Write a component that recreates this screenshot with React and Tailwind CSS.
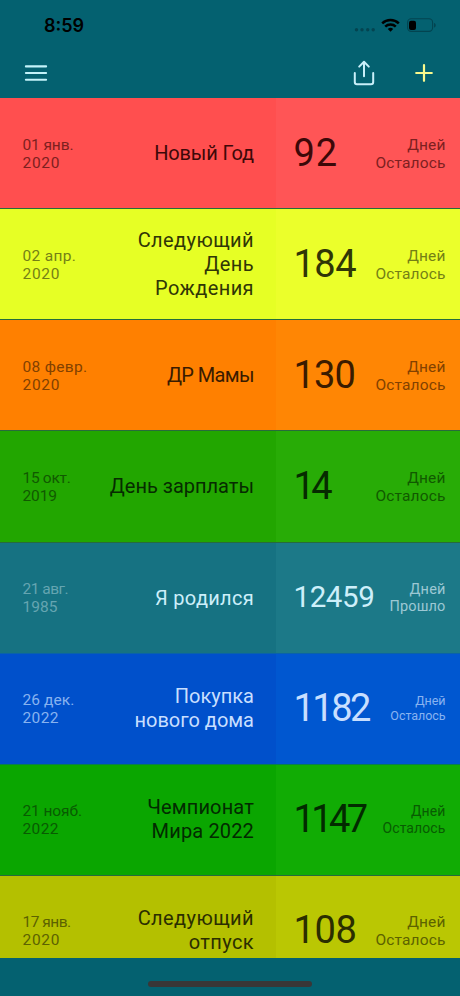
const events = [
    { day: '01 янв.', year: '2020', title: ['Новый Год'], count: '92', status: 'Осталось', row: 'bg-[#ff4f4f]', side: 'bg-[#ff5556]', text: 'text-[#3d0808]', muted: 'text-[#7d2020]', daySpace: '-tracking-[0.1px]', yearSpace: 'tracking-[0.7px]', titleSpace: '-tracking-[0.15px]', countSpace: 'tracking-[0.8px]' },
    { day: '02 апр.', year: '2020', title: ['Следующий', 'День', 'Рождения'], count: '184', status: 'Осталось', row: 'bg-[#e6ff25]', side: 'bg-[#ebff2b]', text: 'text-[#303606]', muted: 'text-[#747f15]', daySpace: 'tracking-[0.3px]', yearSpace: 'tracking-[0.7px]', titleSpace: 'tracking-[0.4px]', countSpace: '-tracking-[0.5px]' },
    { day: '08 февр.', year: '2020', title: ['ДР Мамы'], count: '130', status: 'Осталось', row: 'bg-[#ff8000]', side: 'bg-[#ff8604]', text: 'text-[#3a1b00]', muted: 'text-[#824100]', daySpace: 'tracking-[0.3px]', yearSpace: 'tracking-[0.7px]', titleSpace: '-tracking-[0.6px]', countSpace: '-tracking-[0.8px]' },
    { day: '15 окт.', year: '2019', title: ['День зарплаты'], count: '14', status: 'Осталось', row: 'bg-[#22a600]', side: 'bg-[#28ac06]', text: 'text-[#062b00]', muted: 'text-[#115900]', daySpace: '-tracking-[0.3px]', yearSpace: '-tracking-[0.1px]', titleSpace: 'tracking-[0px]', countSpace: '-tracking-[3.5px]' },
    { day: '21 авг.', year: '1985', title: ['Я родился'], count: '12459', status: 'Прошло', row: 'bg-[#167282]', side: 'bg-[#1c7988]', text: 'text-[#cdeffa]', muted: 'text-[#9cc8d4]', date: 'text-[#65a5b1]', divider: 'border-[#0a62a8]', size: 'text-[29.5px]', label: 'text-[14.5px] leading-[17px]', daySpace: '-tracking-[0.5px]', yearSpace: 'tracking-[0px]', titleSpace: 'tracking-[0.3px]', countSpace: '-tracking-[0.4px]' },
    { day: '26 дек.', year: '2022', title: ['Покупка', 'нового дома'], count: '1182', status: 'Осталось', row: 'bg-[#0050cb]', side: 'bg-[#0057d0]', text: 'text-[#c8dfff]', muted: 'text-[#88b3f0]', divider: 'border-[#0a7d50]', nudge: 'pt-0', label: 'text-[12.5px] leading-[14.5px]', labelSpace: '-tracking-[0.05px]', daySpace: 'tracking-[0.1px]', yearSpace: 'tracking-[0.4px]', titleSpace: 'tracking-[0px]', countSpace: '-tracking-[2.5px]' },
    { day: '21 нояб.', year: '2022', title: ['Чемпионат', 'Мира 2022'], count: '1147', status: 'Осталось', row: 'bg-[#0aa600]', side: 'bg-[#11ac04]', text: 'text-[#022b00]', muted: 'text-[#085b02]', nudge: 'pt-0', label: 'text-[14px] leading-[16.5px]', labelSpace: 'tracking-[0.1px]', daySpace: '-tracking-[0.1px]', yearSpace: 'tracking-[0.4px]', titleSpace: 'tracking-[0.15px]', countSpace: '-tracking-[3.6px]' },
    { day: '17 янв.', year: '2020', title: ['Следующий', 'отпуск'], count: '108', status: 'Осталось', row: 'bg-[#b4c000]', side: 'bg-[#bac703]', text: 'text-[#2b2e00]', muted: 'text-[#5c6200]', nudge: 'pt-0', daySpace: '-tracking-[0.5px]', yearSpace: 'tracking-[0.7px]', titleSpace: 'tracking-[0.4px]', countSpace: '-tracking-[0.4px]' },
];

const StatusBar = () => (
    <div className="flex h-[50px] items-center justify-between pl-11 pr-6 text-black">
        <span className="text-[18px] font-semibold font-['Inter',sans-serif]">8:59</span>
        <div className="flex items-center">
            <svg width="22" height="18" viewBox="0 0 22 18" fill="#044450">
                <circle cx="3.5" cy="13.7" r="1.7" />
                <circle cx="9" cy="13.7" r="1.7" />
                <circle cx="14.7" cy="13.7" r="1.7" />
                <circle cx="20.2" cy="13.7" r="1.7" />
            </svg>
            <svg className="ml-1.5" width="19" height="14" viewBox="0 0 19 14" fill="none" stroke="black" strokeWidth="2.5">
                <path d="M1.2 5.4a12 12 0 0 1 16.6 0" />
                <path d="M4.2 8.6a7.7 7.7 0 0 1 10.6 0" />
                <path d="M6.8 11a4 4 0 0 1 5.4 0L9.5 13.8z" fill="black" stroke="none" />
            </svg>
            <svg className="ml-[7px]" width="29" height="14" viewBox="0 0 29 14">
                <rect x="0.6" y="0.8" width="25" height="12.6" rx="3.6" fill="none" stroke="#034450" strokeWidth="1.1" />
                <rect x="2" y="2.7" width="7" height="9.2" rx="2" fill="black" />
                <path d="M27 4.9c2.3.6 2.3 4 0 4.6z" fill="#034450" />
            </svg>
        </div>
    </div>
);

const Toolbar = () => (
    <div className="flex h-12 items-center justify-between pb-[1.5px] pl-6 pr-[26px]">
        <svg width="24" height="20" viewBox="0 0 24 20" stroke="#c3f3fa" strokeWidth="2.1" strokeLinecap="round">
            <path d="M1.9 3.4h20.2M1.9 10h20.2M1.9 16.7h20.2" />
        </svg>
        <div className="flex items-center gap-[39px]">
            <svg width="22" height="28" viewBox="0 0 22 28" fill="none" stroke="#c9eff9" strokeWidth="2" strokeLinecap="round" strokeLinejoin="round">
                <path d="M11 17.3V3M6.2 7.6L11 2.8l4.8 4.8M1.8 14v9a2.2 2.2 0 0 0 2.2 2.2h14a2.2 2.2 0 0 0 2.2-2.2v-9" />
            </svg>
            <svg width="20" height="20" viewBox="0 0 20 20" stroke="#f9f98d" strokeWidth="2.2" strokeLinecap="round">
                <path d="M10 2.2v15.6M2.2 10h15.6" />
            </svg>
        </div>
    </div>
);

const EventRow = ({ event }) => (
    <div className={`flex h-[111.15px] shrink-0 border-b ${event.divider || 'border-[#276b3c]'} ${event.row}`}>
        <div className={`flex w-[276px] items-center justify-between pl-[22.5px] pr-[22px] ${event.nudge || 'pt-[1.5px]'}`}>
            <div className={`text-[15.5px] leading-[18px] whitespace-nowrap ${event.date || event.muted}`}>
                <p className={event.daySpace}>{event.day}</p>
                <p className={event.yearSpace}>{event.year}</p>
            </div>
            <div className={`text-right text-[20px] leading-[23.7px] whitespace-nowrap ${event.titleSpace} ${event.text}`}>
                {event.title.map(line => <p key={line}>{line}</p>)}
            </div>
        </div>
        <div className={`flex flex-1 items-center justify-between pl-[17.5px] pr-[14.5px] ${event.nudge || 'pt-[1.5px]'} ${event.side}`}>
            <span className={`mb-[1.5px] leading-none ${event.size || 'text-[38px]'} ${event.countSpace} ${event.text}`}>{event.count}</span>
            <div className={`text-right ${event.labelSpace || 'tracking-[0.15px]'} ${event.label || 'text-[15.5px] leading-[18px]'} ${event.muted}`}>
                <p>Дней</p>
                <p>{event.status}</p>
            </div>
        </div>
    </div>
);

const App = () => (
    <div className="flex h-screen w-full flex-col overflow-hidden bg-[#046170] font-['Roboto',sans-serif]">
        <StatusBar />
        <Toolbar />
        <main className="flex h-[860px] flex-col overflow-hidden">
            {events.map(event => <EventRow key={event.day} event={event} />)}
        </main>

        {/* Home indicator */}
        <div className="flex flex-1 items-center justify-center pt-3.5">
            <div className="h-[6px] w-[164px] rounded-full bg-[#393637]" />
        </div>
    </div>
);

export default App;
